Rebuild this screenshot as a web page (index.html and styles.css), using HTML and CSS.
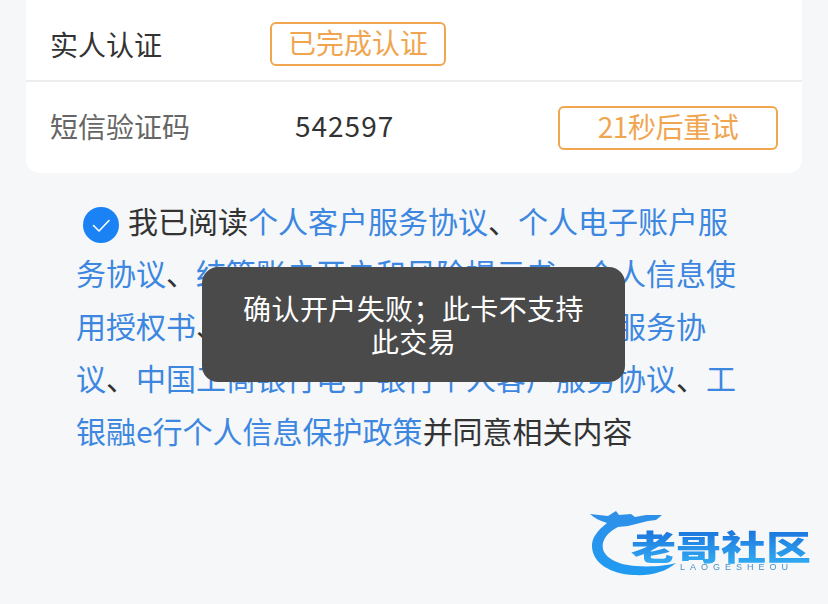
FILE: index.html
```html
<!DOCTYPE html>
<html>
<head>
  <title>实人认证</title>
  <meta name="viewport" content="width=device-width, initial-scale=1.0">
  <link rel="stylesheet" href="styles.css">
</head>
<body>
  <div class="card">
    <div class="row row-verify">
      <span class="label">实人认证</span>
      <span class="tag">已完成认证</span>
    </div>
    <div class="row row-code">
      <span class="label label-muted">短信验证码</span>
      <span class="code">542597</span>
      <button class="retry">21秒后重试</button>
    </div>
  </div>

  <p class="agreement">
    <span class="check">
      <svg width="36" height="36" viewBox="0 0 36 36">
        <circle cx="18" cy="18" r="18" fill="#1a82f5"/>
        <path d="M10.5 18.5l5.5 5.5 10-10.5" fill="none" stroke="#fff" stroke-width="1.6" stroke-linecap="round" stroke-linejoin="round"/>
      </svg>
    </span>我已阅读<a>个人客户服务协议</a>、<a>个人电子账户服务协议</a>、<a>结算账户开户和风险提示书</a>、<a>个人信息使用授权书</a>、<a>中国工商银行电子银行章程</a>、<a>服务协议</a>、<a>中国工商银行电子银行个人客户服务协议</a>、<a>工银融e行个人信息保护政策</a>并同意相关内容
  </p>

  <div class="toast">确认开户失败；此卡不支持此交易</div>

  <svg class="watermark" width="228" height="70" viewBox="0 0 228 70">
    <defs>
      <linearGradient id="swoosh" x1="0" y1="0" x2="0" y2="1">
        <stop offset="0" stop-color="#2f8fe8"/>
        <stop offset="1" stop-color="#1f9bf2"/>
      </linearGradient>
      <linearGradient id="logoText" x1="0" y1="0" x2="0" y2="1">
        <stop offset="0" stop-color="#1668d8"/>
        <stop offset="1" stop-color="#36b4f5"/>
      </linearGradient>
    </defs>
    <path d="M2 6L20 8L28 3L31 7L43 6L47 9L58 7L74 7L68 12L60 13L52 15L40 18L30 19C20 24 13 32 15 41C17 50 30 57 48 58C62 59 78 58 88 55C78 64 62 68 46 67C22 66 5 55 4 39C3.5 30 9 23 19 15C12 13 6 10 2 6Z" fill="url(#swoosh)"/>
    <text class="logo-name" x="43" y="70" transform="scale(1 0.75)" fill="url(#logoText)">老哥社区</text>
    <text class="logo-sub" x="92" y="62">LAOGESHEOU</text>
  </svg>
</body>
</html>
```

FILE: styles.css
```css
body {
  margin: 0;
  height: 604px;
  overflow: hidden;
  position: relative;
  background-color: #f5f7f9;
  font-family: "Noto Sans CJK SC", "Liberation Sans", sans-serif;
  color: #333;
}

.card {
  margin: 0 26px;
  background-color: #fff;
  border-radius: 0 0 14px 14px;
}

.row {
  display: flex;
  align-items: center;
  padding: 0 24px 0 24px;
  font-size: 28px;
}

.row-verify {
  height: 80px;
  border-bottom: 2px solid #eceded;
}

.row-code {
  height: 91px;
}

.label {
  width: 220px;
  flex-shrink: 0;
}

.row-verify .label {
  padding-top: 8px;
}

.row-code .label {
  padding-bottom: 4px;
}

.label-muted {
  color: #666;
}

.tag,
.retry {
  box-sizing: border-box;
  height: 44px;
  display: flex;
  align-items: center;
  justify-content: center;
  padding: 0 0 3px;
  font-family: inherit;
  font-size: 28px;
  color: #f0a650;
  background-color: #fff;
  border: 2px solid #f0a650;
  border-radius: 6px;
}

.tag {
  width: 176px;
  margin-top: 7px;
}

.code {
  margin-left: 25px;
  padding-bottom: 5px;
  letter-spacing: 1px;
}

.retry {
  width: 220px;
  margin-left: auto;
  letter-spacing: -0.4px;
}

.agreement {
  margin: 20.5px 91px 0 76px;
  font-size: 30px;
  line-height: 52.5px;
  color: #333;
}

.agreement a {
  color: #3d87e0;
}

.check {
  display: inline-block;
  width: 36px;
  height: 36px;
  margin: 0 9px 0 7px;
  vertical-align: -10.5px;
}

.toast {
  position: absolute;
  left: 202px;
  top: 267px;
  box-sizing: border-box;
  width: 423px;
  height: 115px;
  padding: 25px 40px 0;
  background-color: #4a4a4a;
  border-radius: 16px;
  color: #fff;
  font-size: 28px;
  line-height: 33px;
  text-align: center;
  letter-spacing: 0.4px;
}

.watermark {
  position: absolute;
  left: 588px;
  top: 508px;
  filter: blur(0.7px);
}

.logo-name {
  font-size: 45px;
  font-weight: 900;
  stroke: #f5f7f9;
  stroke-width: 3px;
  paint-order: stroke;
}

.logo-sub {
  font-family: "Liberation Sans", sans-serif;
  font-size: 9px;
  letter-spacing: 5px;
  fill: #4a90c8;
}
```
